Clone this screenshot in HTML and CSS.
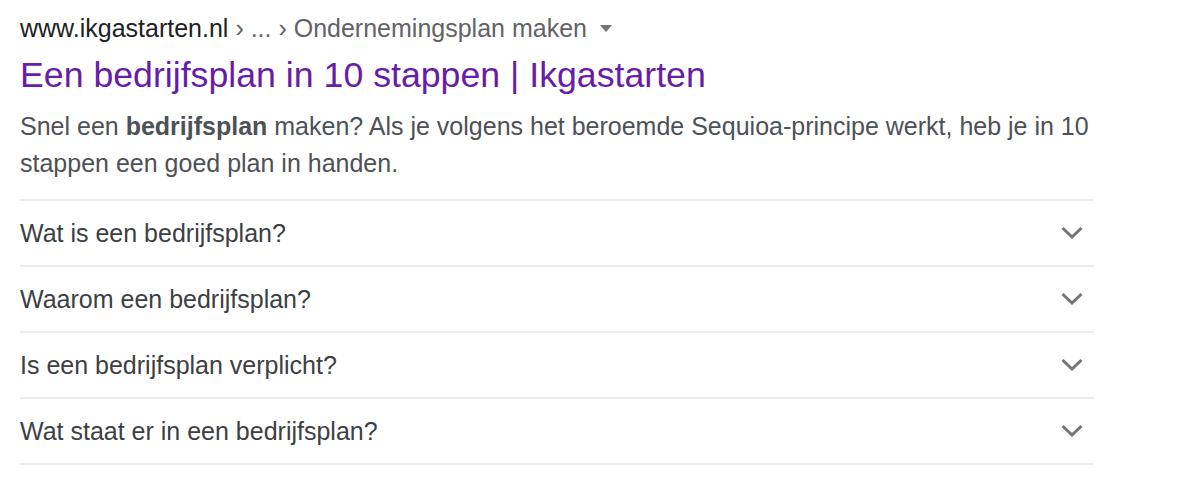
FILE: index.html
```html
<!DOCTYPE html>
<html lang="nl">
<head>
    <meta charset="UTF-8">
    <title>Een bedrijfsplan in 10 stappen | Ikgastarten</title>
    <link rel="stylesheet" href="styles.css">
</head>
<body>
    <div class="result">
        <div class="crumbs">
            <span class="domain">www.ikgastarten.nl</span>
            <span class="path"> › ... › Ondernemingsplan maken</span>
            <span class="caret"></span>
        </div>
        <a class="title" href="#">Een bedrijfsplan in 10 stappen | Ikgastarten</a>
        <p class="snippet">Snel een <b>bedrijfsplan</b> maken? Als je volgens het beroemde Sequioa-principe werkt, heb je in 10 stappen een goed plan in handen.</p>
        <div class="faq">
            <div class="faq-row">
                <span>Wat is een bedrijfsplan?</span>
                <svg class="chev" width="24" height="14" viewBox="0 0 24 14"><polyline points="2.5,2 12,11 21.5,2" /></svg>
            </div>
            <div class="faq-row">
                <span>Waarom een bedrijfsplan?</span>
                <svg class="chev" width="24" height="14" viewBox="0 0 24 14"><polyline points="2.5,2 12,11 21.5,2" /></svg>
            </div>
            <div class="faq-row">
                <span>Is een bedrijfsplan verplicht?</span>
                <svg class="chev" width="24" height="14" viewBox="0 0 24 14"><polyline points="2.5,2 12,11 21.5,2" /></svg>
            </div>
            <div class="faq-row">
                <span>Wat staat er in een bedrijfsplan?</span>
                <svg class="chev" width="24" height="14" viewBox="0 0 24 14"><polyline points="2.5,2 12,11 21.5,2" /></svg>
            </div>
        </div>
    </div>
</body>
</html>
```

FILE: styles.css
```css
body {
    margin: 0;
    background: #fff;
    font-family: "Liberation Sans", Arial, sans-serif;
}
.result {
    width: 1074px;
    margin-left: 20px;
    padding-top: 12px;
}
.crumbs {
    display: flex;
    align-items: center;
    font-size: 25px;
    line-height: 32px;
    white-space: pre;
}
.crumbs .domain {
    color: #202124;
}
.crumbs .path {
    color: #5f6368;
}
.crumbs .caret {
    width: 0;
    height: 0;
    margin-left: 13px;
    border-left: 6px solid transparent;
    border-right: 6px solid transparent;
    border-top: 7px solid #70757a;
}
.title {
    display: block;
    margin-top: 9px;
    font-size: 35.7px;
    line-height: 44px;
    color: #681da8;
    text-decoration: none;
}
.snippet {
    margin: 11px -20px 0 0;
    font-size: 25px;
    line-height: 37px;
    color: #4d5156;
}
.faq {
    margin-top: 17px;
    border-top: 2px solid #ececec;
}
.faq-row {
    display: flex;
    align-items: center;
    justify-content: space-between;
    height: 64px;
    border-bottom: 2px solid #ececec;
    font-size: 25px;
    color: #3c4043;
}
.chev {
    margin-right: 10px;
}
.chev polyline {
    fill: none;
    stroke: #70757a;
    stroke-width: 3;
}
```
